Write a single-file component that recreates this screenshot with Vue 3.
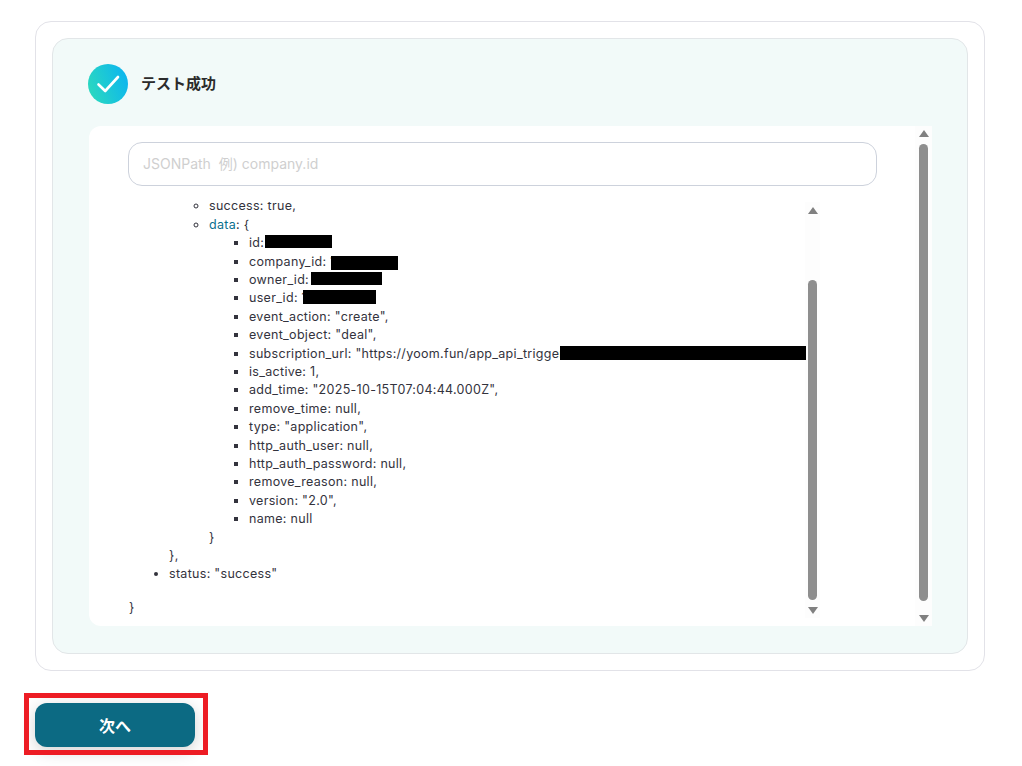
<script setup>
const inner = [
  { k: 'id:', g: '', box: { left: '16px', width: '67px', top: '-4px', height: '13px' } },
  { k: 'company_id: ', g: '1', box: { left: '82px', width: '67px', top: '-2px', height: '14px' } },
  { k: 'owner_id: ', g: '', box: { left: '62px', width: '71px', top: '-4px', height: '13px' } },
  { k: 'user_id: ', g: '1', box: { left: '54px', width: '73px', top: '-4px', height: '14px' } },
  { k: 'event_action: ', g: '"create",' },
  { k: 'event_object: ', g: '"deal",' },
  { k: 'subscription_url: ', g: '"https://yoom.fun/app_api_trigger', box: { left: '311px', width: '248px', top: '-4px', height: '14px' } },
  { k: 'is_active: ', g: '1,' },
  { k: 'add_time: ', g: '"2025-10-15T07:04:44.000Z",' },
  { k: 'remove_time: ', g: 'null,' },
  { k: 'type: ', g: '"application",' },
  { k: 'http_auth_user: ', g: 'null,' },
  { k: 'http_auth_password: ', g: 'null,' },
  { k: 'remove_reason: ', g: 'null,' },
  { k: 'version: ', g: '"2.0",' },
  { k: 'name: ', g: 'null' }
]
</script>

<template>
  <div class="page">
    <section class="outer">
      <div class="panel">
        <header class="head">
          <span class="badge">
            <svg width="24" height="24" viewBox="0 0 24 24" fill="none">
              <path d="M2.5 12.5 L9.2 19 L22 5" stroke="#fff" stroke-width="2.6" stroke-linecap="round" stroke-linejoin="round" />
            </svg>
          </span>
          <h2 class="title">テスト成功</h2>
        </header>
        <div class="box">
          <div class="box-main">
            <div class="field">JSONPath&nbsp;&nbsp;例) company.id</div>
            <div class="result">
              <div class="code">
                <ul class="l1">
                  <li class="hidden-li">
                    <ul class="l2">
                      <li>success: true,</li>
                      <li><span class="key">data</span>: {
                        <ul class="l3">
                          <li v-for="row in inner" :key="row.k" class="row">
                            {{ row.k }}{{ row.g }}
                            <i v-if="row.box" class="mask" :style="row.box"></i>
                          </li>
                        </ul>
                        <div class="close">}</div>
                      </li>
                    </ul>
                    <div class="close-2">},</div>
                  </li>
                  <li>status: "success"</li>
                </ul>
                <div class="end">}</div>
              </div>
              <div class="bar bar-in">
                <span class="up"></span>
                <span class="track"><span class="thumb thumb-in"></span></span>
                <span class="down"></span>
              </div>
            </div>
          </div>
          <div class="bar bar-out">
            <span class="up"></span>
            <span class="track"><span class="thumb thumb-out"></span></span>
            <span class="down"></span>
          </div>
        </div>
      </div>
    </section>
    <div class="mark">
      <button class="next">次へ</button>
    </div>
  </div>
</template>

<style scoped>
.page {
  height: 766px;
  box-sizing: border-box;
  padding: 21px 37px 0 35px;
  background: #fff;
  font-family: Inter, "Noto Sans CJK JP", sans-serif;
  overflow: hidden;
}
.outer {
  height: 650px;
  box-sizing: border-box;
  border: 1px solid #e2e2e8;
  border-radius: 16px;
  padding: 16px;
}
.panel {
  height: 616px;
  box-sizing: border-box;
  border: 1px solid #e2e6e8;
  border-radius: 16px;
  background: #f2faf9;
  padding: 25px 35px 27px 36px;
}
.head {
  display: flex;
  align-items: center;
  gap: 13px;
  height: 40px;
  margin: 0 0 22px -1px;
}
.badge {
  width: 40px;
  height: 40px;
  border-radius: 50%;
  background: linear-gradient(70deg, #2ad8c0 10%, #0db6ee 90%);
  display: flex;
  align-items: center;
  justify-content: center;
}
.title {
  margin: 0;
  font-size: 15px;
  line-height: 22px;
  font-weight: 700;
  color: #2b2b2b;
}
.box {
  height: 500px;
  background: #fff;
  border-radius: 12px 0 0 12px;
  display: flex;
}
.box-main {
  flex: 1;
  min-width: 0;
  padding: 16px 0 0 39px;
  box-sizing: border-box;
}
.field {
  width: 749px;
  height: 44px;
  box-sizing: border-box;
  border: 1px solid #cdd2dc;
  border-radius: 14px;
  padding: 0 14px;
  line-height: 42px;
  font-size: 14px;
  color: #cfcfcf;
}
.result {
  display: flex;
  margin-top: 16px;
  height: 416px;
}
.code {
  width: 678px;
  overflow: hidden;
  font-size: 12.5px;
  line-height: 18.4px;
  letter-spacing: 0.3px;
  color: #33333d;
  white-space: nowrap;
  padding: 0 0 0 1px;
  box-sizing: border-box;
}
ul {
  margin: 0;
  padding: 0 0 0 40px;
}
.l1 { list-style: disc; margin-top: -4.7px; }
.l2 { list-style: circle; }
.l3 { list-style: square; }
.hidden-li { list-style: none; }
.row { position: relative; }
.mask {
  position: absolute;
  display: block;
  background: #000;
  margin-top: 5px;
}
.key { color: #0a6f8e; }
.end { margin-top: 15px; }
.bar {
  flex: none;
  display: flex;
  flex-direction: column;
  align-items: center;
  background: #fdfdfd;
  box-sizing: border-box;
}
.bar-in {
  width: 15px;
  height: 416px;
  padding: 5px 0 4px;
  margin-left: -1px;
}
.bar-out {
  width: 17px;
  height: 500px;
  padding: 4px 0 4px;
}
.track {
  flex: 1;
  width: 9px;
  position: relative;
}
.thumb {
  position: absolute;
  left: 0;
  width: 9px;
  background: #8e8e8e;
  border-radius: 5px;
}
.thumb-in { top: 66px; height: 320px; }
.thumb-out { top: 7px; height: 457px; }
.up, .down {
  width: 0;
  height: 0;
  border-left: 5px solid transparent;
  border-right: 5px solid transparent;
}
.up { border-bottom: 7px solid #808080; }
.down { border-top: 7px solid #808080; }
.mark {
  position: relative;
  width: 184px;
  height: 62px;
  box-sizing: border-box;
  margin: 22px 0 0 -11px;
  padding: 10px 11px;
}
.mark::after {
  content: "";
  position: absolute;
  inset: 0;
  border: 5px solid #ed1c24;
  pointer-events: none;
}
.next {
  display: block;
  width: 160px;
  height: 44px;
  border: 0;
  border-radius: 12px;
  background: #0c6a83;
  color: #fff;
  font: 700 16px Inter, "Noto Sans CJK JP", sans-serif;
  box-shadow: 0 4px 16px rgba(0, 0, 0, 0.18);
}
</style>
